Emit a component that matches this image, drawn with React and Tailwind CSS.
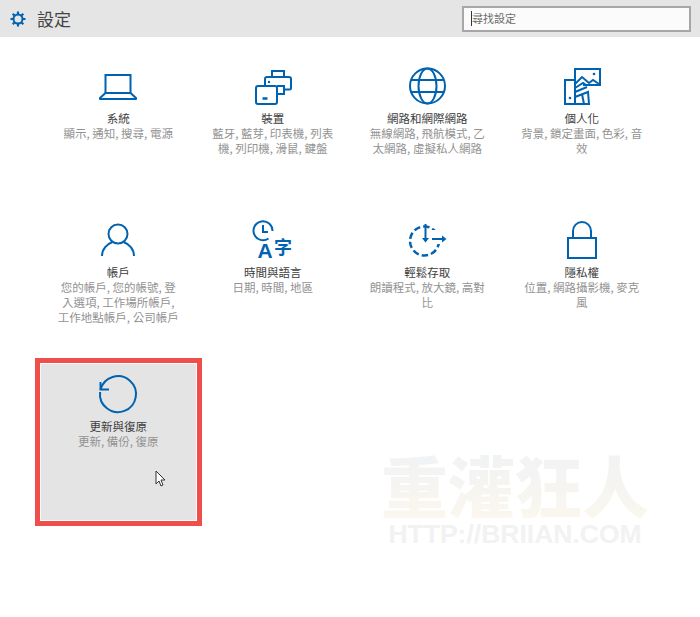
import React from "react";

const stroke = {
  fill: "none",
  stroke: "#0063b1",
  strokeWidth: 2,
};

const Icon = ({ children }) => (
  <svg viewBox="0 0 48 48" className="w-12 h-12 shrink-0" {...stroke}>
    {children}
  </svg>
);

const icons = {
  system: (
    <Icon>
      <path d="M11.5 31V13h25v18" />
      <path d="M11.5 31h25l5.5 5v1H6v-1z" strokeLinejoin="round" />
    </Icon>
  ),
  devices: (
    <Icon>
      <path d="M23 15V9h12v6" />
      <path d="M16 24v-7a2 2 0 0 1 2-2h22a2 2 0 0 1 2 2v9a1.500 1.500 0 0 1-1.500 1.500H35" />
      <path d="M28 24h7v8h-7" />
      <rect x="7" y="24" width="21" height="18" rx="2" />
      <path d="M13.500 36.500h5" strokeWidth="2.500" />
      <circle cx="20" cy="20" r="1.200" fill="#0063b1" stroke="none" />
    </Icon>
  ),
  network: (
    <Icon>
      <circle cx="24.500" cy="24" r="17.500" />
      <ellipse cx="24.500" cy="24" rx="9" ry="17.500" />
      <path d="M8 18h33M8 30h33" />
    </Icon>
  ),
  personal: (
    <Icon>
      <path d="M17 17V7h25v16H25" />
      <path d="M7 18h10v24H7z" />
      <path d="M17 22l7-7 7 6 4-3 6 4" />
      <path d="M17 26l8-5 3 2M17 30l12-5M17 35l13-5 1 12H17" />
      <path d="M24 32l2 10" />
      <circle cx="36" cy="12" r="1.300" fill="#0063b1" stroke="none" />
      <circle cx="12" cy="36" r="1.300" fill="#0063b1" stroke="none" />
    </Icon>
  ),
  account: (
    <Icon>
      <circle cx="24" cy="18" r="9.500" />
      <path d="M8 40c0-7 5-12 10.500-14M29.500 26C35 28 40 33 40 40" />
    </Icon>
  ),
  time: (
    <Icon>
      <path d="M19.500 22.500A9.500 9.500 0 1 1 23.500 15" />
      <path d="M14 9v7h5" />
      <text x="8.500" y="42" fontSize="21" fontWeight="700" fill="#0063b1" stroke="none" fontFamily="'Liberation Sans', sans-serif">A</text>
      <text x="25" y="38" fontSize="18" fontWeight="700" fill="#0063b1" stroke="none" fontFamily="'Noto Sans CJK TC', sans-serif">字</text>
    </Icon>
  ),
  ease: (
    <Icon>
      <circle cx="21.500" cy="25" r="14.500" strokeDasharray="6.500 3" strokeWidth="2.500" />
      <rect x="27" y="14" width="18" height="14" fill="#fff" stroke="none" />
      <path d="M22.500 8v17" />
      <path d="M19 22l3.500 4.500 3.500-4.500z" fill="#0063b1" stroke="none" />
      <path d="M29 23h11" />
      <path d="M39 19.500l4.500 3.500-4.500 3.500z" fill="#0063b1" stroke="none" />
    </Icon>
  ),
  privacy: (
    <Icon>
      <rect x="10" y="22" width="28" height="20" />
      <path d="M15 22v-7a9 9 0 0 1 18 0v7" />
    </Icon>
  ),
  update: (
    <Icon>
      <path d="M6.500 19.800A18 18 0 1 1 6.100 22" />
      <path d="M6.500 12v7.500H15" />
    </Icon>
  ),
};

const items = [
  { icon: "system", title: "系統", desc: "顯示, 通知, 搜尋, 電源" },
  { icon: "devices", title: "裝置", desc: "藍牙, 藍芽, 印表機, 列表機, 列印機, 滑鼠, 鍵盤" },
  { icon: "network", title: "網路和網際網路", desc: "無線網路, 飛航模式, 乙太網路, 虛擬私人網路" },
  { icon: "personal", title: "個人化", desc: "背景, 鎖定畫面, 色彩, 音效" },
  { icon: "account", title: "帳戶", desc: "您的帳戶, 您的帳號, 登入選項, 工作場所帳戶, 工作地點帳戶, 公司帳戶" },
  { icon: "time", title: "時間與語言", desc: "日期, 時間, 地區" },
  { icon: "ease", title: "輕鬆存取", desc: "朗讀程式, 放大鏡, 高對比" },
  { icon: "privacy", title: "隱私權", desc: "位置, 網路攝影機, 麥克風" },
  { icon: "update", title: "更新與復原", desc: "更新, 備份, 復原", active: true },
];

const Tile = ({ item }) => (
  <div
    className={`flex flex-col items-center pt-[6px] ${
      item.active
        ? "h-[156px] bg-[#e4e4e4] outline-[5px] outline-[#ef4f4a] outline-offset-1"
        : ""
    }`}
  >
    {icons[item.icon]}
    <div className="text-[11.5px] leading-4 text-[#3d3d3d]">{item.title}</div>
    <div className="w-[124px] text-center text-[11.5px] leading-[15px] text-[#929292]">
      {item.desc}
    </div>
  </div>
);

export default function App() {
  return (
    <div
      className="relative w-[700px] h-[617px] overflow-hidden bg-white"
      style={{ fontFamily: "'Noto Sans CJK TC', 'Liberation Sans', sans-serif" }}
    >
      {/* Header */}
      <div className="flex items-center h-[37px] bg-[#e5e5e5] pl-[10px] pr-[9px]">
        <svg viewBox="0 0 16 16" className="w-4 h-4" fill="none" stroke="#0063b1">
          <circle cx="8" cy="8" r="4.500" strokeWidth="2" />
          <path
            d="M8 0.500v2.500M8 13v2.500M0.500 8H3M13 8h2.500M2.700 2.700l1.800 1.800M11.500 11.500l1.800 1.800M13.300 2.700l-1.800 1.800M4.500 11.500l-1.800 1.800"
            strokeWidth="2.200"
          />
        </svg>
        <h1 className="ml-[11px] text-[17px] leading-none font-normal text-[#444444]">設定</h1>
        <div className="ml-auto flex items-center w-[229px] h-[26px] border-2 border-[#a6a6a6] bg-[#fbfbfb] pl-[7px]">
          <span className="w-px h-[15px] bg-[#333333]" />
          <span className="text-[11px] text-[#6b6b6b]">尋找設定</span>
        </div>
      </div>

      {/* Tiles */}
      <div className="grid grid-cols-[repeat(4,154.5px)] auto-rows-[154px] pl-[41px] pt-[19px]">
        {items.map((item) => (
          <Tile key={item.icon} item={item} />
        ))}
      </div>

      {/* Mouse cursor */}
      <svg viewBox="0 0 11 17" className="absolute left-[155px] top-[470px] w-[11px] h-[17px]">
        <path
          d="M1 1v13l3-3 2 5 2-1-2-5h4z"
          fill="#fff"
          stroke="#333"
          strokeWidth="1"
          strokeLinejoin="round"
        />
      </svg>

      {/* Watermark */}
      <div className="absolute left-[381px] top-[450px] w-[268px] flex flex-col items-center pointer-events-none">
        <div className="text-[67px] leading-[68px] font-black whitespace-nowrap bg-gradient-to-b from-[#f0f2f5] to-[#fbf7ee] bg-clip-text text-transparent">
          重灌狂人
        </div>
        <div
          className="mt-1 text-[26.5px] leading-6 font-bold whitespace-nowrap text-[#f2f2f2]"
          style={{ fontFamily: "'Liberation Sans', sans-serif" }}
        >
          HTTP://BRIIAN.COM
        </div>
      </div>
    </div>
  );
}
